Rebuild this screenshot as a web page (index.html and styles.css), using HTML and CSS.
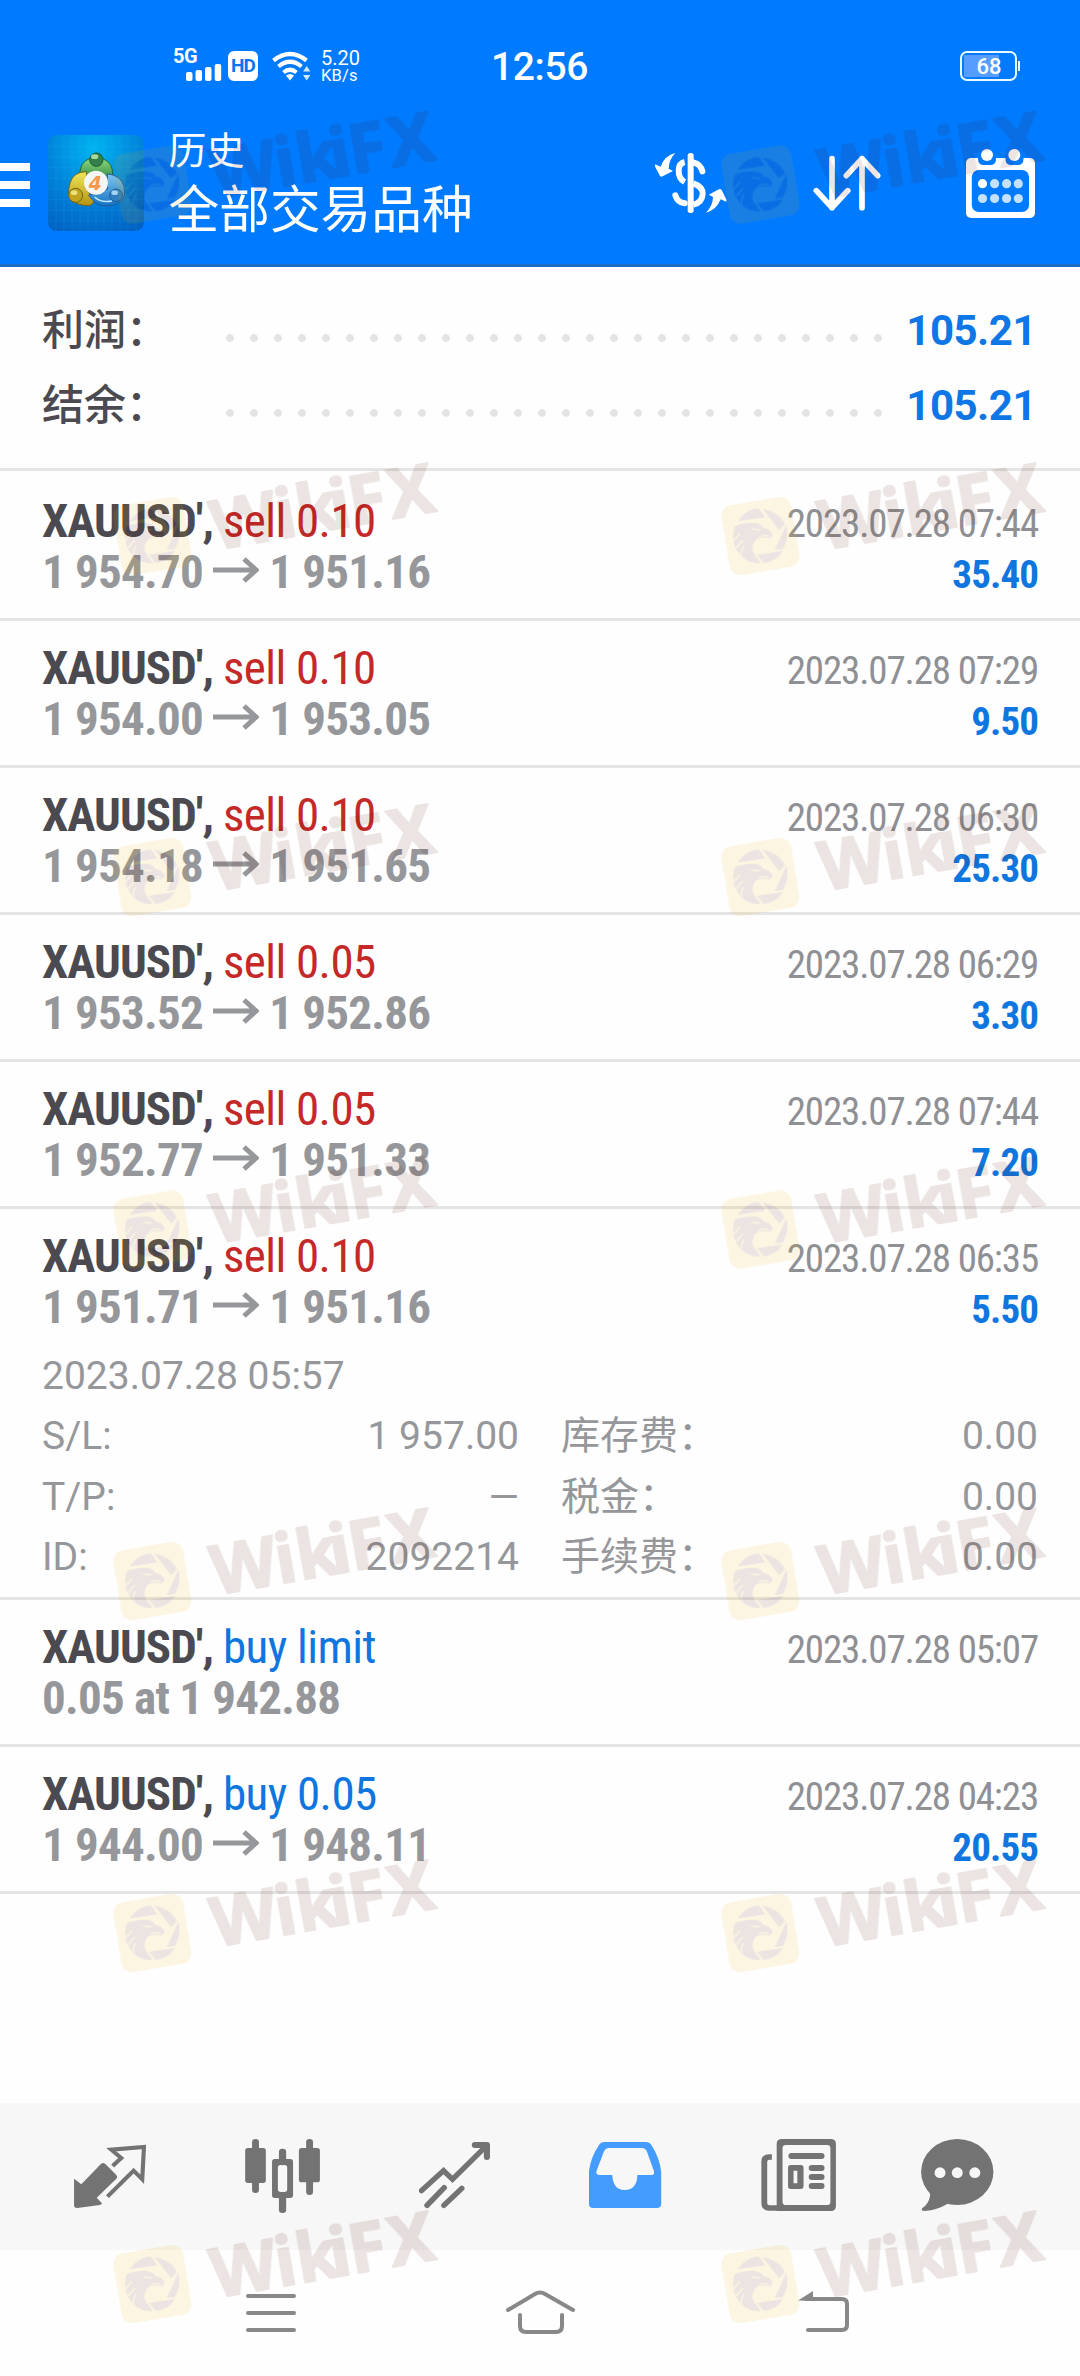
FILE: index.html
```html
<!DOCTYPE html>
<html lang="zh-CN">
<head>
<meta charset="utf-8">
<title>历史</title>
<link rel="stylesheet" href="styles.css">
</head>
<body>
<div class="screen">
  <svg class="defs" width="0" height="0">
    <defs>
      <symbol id="arrow" viewBox="0 0 46 26">
        <path d="M0 13H42M31 2L43 13L31 24" fill="none" stroke="currentColor" stroke-width="5"/>
      </symbol>
      <g id="mark">
        <g transform="translate(-157 -160)">
          <rect x="-106" y="-106" width="212" height="212" rx="32" transform="translate(157 160) rotate(-9.5)" fill="#ecad00"/>
          <g fill="#551a08">
            <path d="M89 116Q112 80 152 77L171 104Z"/>
            <path d="M163 78Q212 86 231 124L213 142Z"/>
            <path d="M235 126Q245 165 224 199L200 202Z"/>
            <path d="M147 216L225 204Q206 236 166 240Z"/>
            <path d="M80 131Q100 119 140 120Q160 124 165 135Q190 139 193 158Q190 164 186 166Q150 160 138 177Q128 200 137 212L158 241Q120 244 95 215Q70 185 76 145Z"/>
          </g>
          <g fill="none" stroke="#ecad00" stroke-width="4">
            <path d="M131 137Q143 143 156 140M152 163Q166 157 182 160M76 175L96 152M84 196L104 172M100 220Q98 204 109 188"/>
          </g>
        </g>
        <text class="mark-text" transform="translate(188 47) rotate(-10)" x="2 196 260 362 420 541" y="-3">WikiFX</text>
      </g>
    </defs>
  </svg>

  <header class="header">
    <div class="status">
      <div class="signal">
        <span class="net">5G</span>
        <svg class="bars" width="36" height="17" viewBox="0 0 36 17" fill="#fff"><rect y="8" width="6.500" height="9" rx="2"/><rect x="9.500" y="6" width="6.500" height="11" rx="2"/><rect x="19" y="3" width="6.500" height="14" rx="2"/><rect x="28.700" width="6.500" height="17" rx="2"/></svg>
      </div>
      <span class="hd">HD</span>
      <svg class="wifi" width="39" height="30" viewBox="0 0 39 30">
        <g fill="none" stroke="#fff" stroke-width="4.200"><path d="M1.500 9.500Q18 -3.500 34.500 9.500"/><path d="M6.500 15.500Q18 6 29.500 15.500"/><path d="M11.500 21.500Q18 16 24.500 21.500"/></g>
        <path d="M14 24.500Q18 21.500 22 24.500L18 29.500Z" fill="#fff"/>
        <path d="M31 20.500L34.700 15L38.400 20.500ZM31 24L34.700 29.500L38.400 24Z" fill="#cfe9ff"/>
      </svg>
      <div class="speed"><span>5.20</span><span class="unit">KB/s</span></div>
      <span class="clock">12:56</span>
      <div class="battery"><span class="level">68</span></div>
    </div>
    <div class="toolbar">
      <div class="menu"><i></i><i></i><i></i></div>
      <svg class="app-logo" width="96" height="96" viewBox="12 14 288 288">
        <defs>
          <radialGradient id="lg" cx=".48" cy=".14" r=".95"><stop offset="0" stop-color="#00b4f0"/><stop offset=".5" stop-color="#0085dc"/><stop offset="1" stop-color="#0062c2"/></radialGradient>
          <linearGradient id="gg" x2="0" y2="1"><stop offset="0" stop-color="#8fd67f"/><stop offset="1" stop-color="#1f7d35"/></linearGradient>
          <linearGradient id="yg" x2="0" y2="1"><stop offset="0" stop-color="#f0e75a"/><stop offset="1" stop-color="#b59312"/></linearGradient>
          <linearGradient id="bg" x2="0" y2="1"><stop offset="0" stop-color="#7fc6ee"/><stop offset="1" stop-color="#1573c4"/></linearGradient>
        </defs>
        <rect x="12" y="14" width="288" height="288" rx="26" fill="url(#lg)"/>
        <path d="M36 14V302M60 14V302M84 14V302M108 14V302M132 14V302M156 14V302M180 14V302M204 14V302M228 14V302M252 14V302M276 14V302M12 48H300M12 80H300M12 112H300M12 144H300M12 176H300M12 208H300M12 240H300M12 272H300" stroke="#4ac4ff" stroke-opacity=".16" stroke-width="2"/>
        <g stroke-width="3">
          <path d="M108 140Q104 96 138 84H174Q208 96 206 136Q200 152 190 160L122 142Z" fill="url(#gg)" stroke="#1d6a3a"/>
          <path d="M128 124Q88 124 78 158Q70 186 78 206Q98 226 136 226Q152 220 150 206L124 172Z" fill="url(#yg)" stroke="#6c6420"/>
          <path d="M190 130Q232 136 240 168Q246 196 234 210Q208 232 176 226Q150 220 134 194L160 188L190 176Z" fill="url(#bg)" stroke="#1a5c9e"/>
          <path d="M152 200Q170 218 204 212" fill="none" stroke="#bfe6ff" stroke-width="5"/>
          <circle cx="157" cy="88" r="20" fill="#35804a" stroke="#1b5a33"/>
          <ellipse cx="152" cy="79" rx="11" ry="7" fill="#a5dba0" stroke="none"/>
          <circle cx="95" cy="195" r="21" fill="#c0a51e" stroke="#75651a"/>
          <ellipse cx="90" cy="187" rx="10" ry="7" fill="#eee07a" stroke="none"/>
          <circle cx="216" cy="195" r="19" fill="#2f7fc0" stroke="#1d5b98"/>
          <ellipse cx="212" cy="187" rx="10" ry="7" fill="#9fd4f4" stroke="none"/>
        </g>
        <circle cx="156" cy="157" r="36" fill="#f4f6f6"/>
        <text class="four" x="154" y="180">4</text>
      </svg>
      <div class="titles"><div class="sub">历史</div><div class="main">全部交易品种</div></div>
      <div class="actions">
        <svg width="74" height="62" viewBox="40 36 222 186">
          <g fill="none" stroke="#fff" stroke-width="18"><path d="M132 66Q114 70 114 92Q114 116 132 126"/><path d="M104 166Q110 188 132 190" stroke-linecap="round"/><path d="M158 67Q180 72 185 94" stroke-linecap="round"/><path d="M158 130Q187 140 186 162Q184 188 158 194"/></g>
          <rect x="141" y="39" width="18" height="180" rx="8" fill="#fff"/>
          <path d="M104 39Q72 46 60 80L44 73Q42 76 44 82L58 108Q60 112 66 109L97 93L84 86Q84 60 104 39Z" fill="#fff"/>
          <path d="M196 218Q228 210 240 178L256 185Q259 182 256 176L243 150Q240 146 235 148L204 164L217 171Q217 196 196 218Z" fill="#fff"/>
        </svg>
        <svg width="68" height="56" viewBox="516 44 204 168" fill="none" stroke="#fff" stroke-width="17" stroke-linecap="round" stroke-linejoin="round">
          <path d="M573 55V202M526 151L573 202L620 151"/><path d="M663 202V55M616 106L663 55L710 106"/>
        </svg>
        <svg width="69" height="69" viewBox="966 147 69 69">
          <rect x="966" y="156" width="69" height="60" rx="5" fill="#fff"/>
          <path d="M978 154h18v3q0 6-6 6h-6q-6 0-6-6ZM1005.500 154h18v3q0 6-6 6h-6q-6 0-6-6Z" fill="#007aff"/>
          <circle cx="987" cy="153" r="6" fill="#fff"/><circle cx="1014.300" cy="153" r="6" fill="#fff"/>
          <rect x="971.800" y="168" width="57.200" height="42" rx="7" fill="#007aff"/>
          <g fill="#c4e2ff"><circle cx="982.500" cy="181.700" r="4.600" fill="#fff"/><circle cx="994.600" cy="181.700" r="4.600"/><circle cx="1006.600" cy="181.700" r="4.600"/><circle cx="1018.300" cy="181.700" r="4.600"/><circle cx="982.500" cy="196.500" r="4.600"/><circle cx="994.600" cy="196.500" r="4.600"/><circle cx="1006.600" cy="196.500" r="4.600"/><circle cx="1018.300" cy="196.500" r="4.600"/></g>
        </svg>
      </div>
    </div>
  </header>

  <main class="content">
    <section class="summary">
      <div class="sum"><span class="sum-label">利润：</span><span class="dots"></span><span class="sum-value">105.21</span></div>
      <div class="sum"><span class="sum-label">结余：</span><span class="dots"></span><span class="sum-value">105.21</span></div>
    </section>

    <section class="deals">
      <article class="deal">
        <div class="line"><div class="name"><b>XAUUSD',</b> <span class="sell">sell 0.10</span></div><time class="date">2023.07.28 07:44</time></div>
        <div class="line"><div class="price">1 954.70 <svg class="to"><use href="#arrow"/></svg> 1 951.16</div><div class="profit">35.40</div></div>
      </article>
      <article class="deal">
        <div class="line"><div class="name"><b>XAUUSD',</b> <span class="sell">sell 0.10</span></div><time class="date">2023.07.28 07:29</time></div>
        <div class="line"><div class="price">1 954.00 <svg class="to"><use href="#arrow"/></svg> 1 953.05</div><div class="profit">9.50</div></div>
      </article>
      <article class="deal">
        <div class="line"><div class="name"><b>XAUUSD',</b> <span class="sell">sell 0.10</span></div><time class="date">2023.07.28 06:30</time></div>
        <div class="line"><div class="price">1 954.18 <svg class="to"><use href="#arrow"/></svg> 1 951.65</div><div class="profit">25.30</div></div>
      </article>
      <article class="deal">
        <div class="line"><div class="name"><b>XAUUSD',</b> <span class="sell">sell 0.05</span></div><time class="date">2023.07.28 06:29</time></div>
        <div class="line"><div class="price">1 953.52 <svg class="to"><use href="#arrow"/></svg> 1 952.86</div><div class="profit">3.30</div></div>
      </article>
      <article class="deal">
        <div class="line"><div class="name"><b>XAUUSD',</b> <span class="sell">sell 0.05</span></div><time class="date">2023.07.28 07:44</time></div>
        <div class="line"><div class="price">1 952.77 <svg class="to"><use href="#arrow"/></svg> 1 951.33</div><div class="profit">7.20</div></div>
      </article>
      <article class="deal open">
        <div class="line"><div class="name"><b>XAUUSD',</b> <span class="sell">sell 0.10</span></div><time class="date">2023.07.28 06:35</time></div>
        <div class="line"><div class="price">1 951.71 <svg class="to"><use href="#arrow"/></svg> 1 951.16</div><div class="profit">5.50</div></div>
        <div class="detail">
          <div class="opened">2023.07.28 05:57</div>
          <div class="pair"><span>S/L:</span><span>1 957.00</span></div><div class="pair"><span>库存费：</span><span>0.00</span></div>
          <div class="pair"><span>T/P:</span><span>—</span></div><div class="pair"><span>税金：</span><span>0.00</span></div>
          <div class="pair"><span>ID:</span><span>2092214</span></div><div class="pair"><span>手续费：</span><span>0.00</span></div>
        </div>
      </article>
      <article class="deal">
        <div class="line"><div class="name"><b>XAUUSD',</b> <span class="buy">buy limit</span></div><time class="date">2023.07.28 05:07</time></div>
        <div class="line"><div class="price">0.05 at 1 942.88</div></div>
      </article>
      <article class="deal">
        <div class="line"><div class="name"><b>XAUUSD',</b> <span class="buy">buy 0.05</span></div><time class="date">2023.07.28 04:23</time></div>
        <div class="line"><div class="price">1 944.00 <svg class="to"><use href="#arrow"/></svg> 1 948.11</div><div class="profit">20.55</div></div>
      </article>
    </section>
  </main>

  <nav class="tabs">
    <svg width="72" height="78" viewBox="74 47 72 78"><g transform="scale(.3444 .3333)" fill="#737373">
      <path d="M215 266L236 283L293 222Q299 216 306 222L337 254Q343 261 337 267L281 323L296 340Q296 344 290 345L224 354Q215 354 215 346Z"/>
      <path d="M327 228L352 204L323 179L418 171L413 268L388 242L312 320" fill="none" stroke="#737373" stroke-width="12"/></g></svg>
    <svg width="75" height="78" viewBox="244 47 75 78"><g transform="scale(.3444 .3333)" fill="#737373">
      <rect x="729" y="147" width="20" height="162" rx="10"/><rect x="709" y="174" width="60" height="105" rx="8"/>
      <rect x="807" y="176" width="21" height="50" rx="10"/><rect x="807" y="310" width="21" height="59" rx="10"/>
      <path fill-rule="evenodd" d="M795 207H840Q848 207 848 215V316Q848 324 840 324H795Q787 324 787 316V215Q787 207 795 207ZM812 225Q804 225 804 233V298Q804 306 812 306H823Q831 306 831 298V233Q831 225 823 225Z"/>
      <rect x="886" y="147" width="20" height="168" rx="10"/><rect x="865" y="174" width="61" height="103" rx="8"/></g></svg>
    <svg width="71" height="78" viewBox="418 47 71 78"><g transform="scale(.3444 .3333)" fill="none" stroke="#737373" stroke-width="16" stroke-linecap="round">
      <path d="M1221 302L1285 242L1311 268L1410 167"/><path d="M1376 165H1411V201" stroke-width="18" stroke-linejoin="round"/><path d="M1237 346L1287 293M1286 346L1338 295"/></g></svg>
    <svg width="73" height="78" viewBox="50.400 47 73 78"><g transform="scale(.3444 .3333)">
      <path fill="#459cff" fill-rule="evenodd" d="M146 246Q150 205 175 166Q181 156 192 156H311Q322 156 328 166Q352 205 356 246V341Q356 354 343 354H160Q146 354 146 341ZM189 186Q194 174 205 174H299Q311 174 315 186L335 244Q337 255 327 255H287Q285 300 250 300Q216 300 214 255H177Q166 255 168 244Z"/></g></svg>
    <svg width="76" height="78" viewBox="222.300 47 76 78"><g transform="scale(.3444 .3333)" fill="#737373">
      <path fill-rule="evenodd" d="M706 147H848Q863 147 863 162V348Q863 363 848 363H691V162Q691 147 706 147ZM718 165Q708 165 708 175V335Q708 345 718 345H837Q847 345 847 335V175Q847 165 837 165Z"/>
      <path d="M677 201H670Q655 201 655 216V338Q655 354 671 354H695" fill="none" stroke="#737373" stroke-width="17"/>
      <rect x="725" y="189" width="105" height="18" rx="9"/>
      <path fill-rule="evenodd" d="M732 225H761Q769 225 769 233V289Q769 297 761 297H732Q724 297 724 289V233Q724 225 732 225ZM740 242V280H751V242Z"/>
      <rect x="784" y="225" width="46" height="18" rx="9"/><rect x="784" y="252" width="46" height="18" rx="9"/><rect x="784" y="279" width="46" height="18" rx="9"/></g></svg>
    <svg class="chat" width="73" height="78" viewBox="381.500 47 73 78"><g transform="scale(.3444 .3333)" fill="#737373">
      <ellipse cx="1213" cy="246" rx="105" ry="99"/><path d="M1125 290Q1136 305 1134 318Q1130 342 1111 355Q1106 362 1118 363Q1155 360 1184 342L1210 320Z"/>
      <g fill="#f7f7f7"><circle cx="1163" cy="248" r="16"/><circle cx="1213" cy="248" r="16"/><circle cx="1264" cy="248" r="16"/></g></g></svg>
  </nav>

  <footer class="sysnav">
    <svg width="50" height="46" viewBox="246 2290 50 46" fill="none" stroke="#888" stroke-width="4" stroke-linecap="round"><path d="M248 2296H294M248 2313H294M248 2330H294"/></svg>
    <svg class="home" width="70" height="46" viewBox="505 2290 70 46" fill="none" stroke="#888" stroke-width="4" stroke-linecap="round"><path d="M508 2310L535 2294Q540 2291 545 2294L573 2310M520 2315V2326Q520 2332 526 2332H556Q562 2332 562 2326V2315"/></svg>
    <svg width="52" height="46" viewBox="798 2290 52 46" fill="none" stroke="#888" stroke-width="4" stroke-linecap="round"><path d="M806 2299H842Q847 2299 847 2304V2325Q847 2330 842 2330H808"/><path d="M798 2300.500L813 2291V2301Z" fill="#888" stroke="none"/></svg>
  </footer>

  <svg class="watermarks" width="1080" height="2376" viewBox="0 0 1080 2376">
    <g opacity=".11">
      <use href="#mark" transform="translate(152.400 184.500) scale(.33333)"/><use href="#mark" transform="translate(760.400 184.500) scale(.33333)"/>
      <use href="#mark" transform="translate(152.400 536) scale(.33333)"/><use href="#mark" transform="translate(760.400 536) scale(.33333)"/>
      <use href="#mark" transform="translate(152.400 877) scale(.33333)"/><use href="#mark" transform="translate(760.400 877) scale(.33333)"/>
      <use href="#mark" transform="translate(152.400 1229.500) scale(.33333)"/><use href="#mark" transform="translate(760.400 1229.500) scale(.33333)"/>
      <use href="#mark" transform="translate(152.400 1581) scale(.33333)"/><use href="#mark" transform="translate(760.400 1581) scale(.33333)"/>
      <use href="#mark" transform="translate(152.400 1933) scale(.33333)"/><use href="#mark" transform="translate(760.400 1933) scale(.33333)"/>
      <use href="#mark" transform="translate(152.400 2284) scale(.33333)"/><use href="#mark" transform="translate(760.400 2284) scale(.33333)"/>
    </g>
  </svg>
</div>
</body>
</html>
```
FILE: styles.css
```css
* { box-sizing: border-box; }
body { margin: 0; background: #fefefe; font-family: Roboto, "Noto Sans CJK SC", sans-serif; }
.screen { position: relative; width: 1080px; height: 2376px; display: flex; flex-direction: column; overflow: hidden; }
.defs { position: absolute; }
svg { display: block; flex: none; }

.header { height: 267px; background: #007aff; border-bottom: 3px solid #1a6cc4; color: #fff; }
.status { height: 102px; padding: 49px 60px 0 173px; display: flex; align-items: flex-start; }
.signal { width: 55px; height: 33px; display: flex; flex-direction: column; }
.net { font-size: 20px; line-height: 15px; font-weight: 700; letter-spacing: -.5px; }
.bars { margin: 0 0 0 13px; }
.hd { width: 30px; height: 30px; margin-top: 2px; border-radius: 6px; background: #fff; color: #0a74f0; font-size: 19px; font-weight: 700; line-height: 30px; text-align: center; letter-spacing: -1px; }
.wifi { margin: 2px 0 0 14px; }
.speed { width: 50px; margin: 1px 0 0 10px; display: flex; flex-direction: column; font-size: 20px; line-height: 17px; }
.unit { font-size: 16.5px; letter-spacing: .2px; }
.clock { margin: -2px 0 0 120px; font-size: 39px; line-height: 40px; font-weight: 500; letter-spacing: -.4px; }
.battery { position: relative; width: 57px; height: 30px; margin: 2px 3px 0 auto; border: 2px solid #e8fbff; border-radius: 7px; padding: 1.500px; background: linear-gradient(#559eff, #559eff) 2px 2px / 35px 22px no-repeat; }
.battery::after { content: ""; position: absolute; right: -5px; top: 8px; width: 2px; height: 10px; background: #e8fbff; }
.level { display: block; margin-left: 1px; text-align: center; font-size: 22px; line-height: 24px; font-weight: 500; }

.toolbar { height: 162px; padding-right: 45px; display: flex; align-items: center; }
.menu { display: flex; flex-direction: column; gap: 10px; width: 30px; margin-top: 4px; }
.menu i { height: 8px; background: #fff; }
.app-logo { margin-left: 18px; }
.four { font: italic 700 56px "DejaVu Sans", sans-serif; fill: #f2994a; text-anchor: middle; }
.titles { margin: -9px 0 0 24.500px; font-family: "Noto Sans CJK SC", sans-serif; font-weight: 400; }
.sub { font-size: 38px; line-height: 55px; }
.main { font-size: 50.700px; line-height: 62px; }
.actions { margin-left: auto; display: flex; align-items: center; gap: 85px; }

.content { height: 1836px; }
.summary { height: 204px; padding: 26px 44px 0 42px; border-bottom: 3px solid #e4e4e4; }
.sum { height: 75px; display: flex; align-items: center; font-size: 42px; line-height: 75px; }
.sum-label { width: 184px; font-weight: 500; color: #4b4a50; }
.dots { width: 672px; height: 8px; margin-top: 15px; background: radial-gradient(circle 4px at 4px 4px, #e4e4e4 3.500px, transparent 4px) 0 0 / 24px 8px; }
.sum-value { margin-left: auto; font-weight: 700; letter-spacing: -.5px; color: #0f76e6; }

.deals { padding-top: 3px; }
.deal { height: 147px; padding: 21px 42px 0 42px; border-bottom: 3px solid #e4e4e4; }
.deal.open { height: 391px; }
.line { height: 51px; display: flex; justify-content: space-between; align-items: baseline; line-height: 51px; font-family: "Roboto Condensed", Roboto, sans-serif; font-stretch: 75%; white-space: nowrap; }
.name, .price { font-size: 47px; }
.name { color: #4b4a50; letter-spacing: -.95px; }
.sell, .buy { letter-spacing: -.55px; }
.sell { color: #c52828; }
.buy { color: #0f76e0; }
.price { font-weight: 700; letter-spacing: -.75px; color: #96979b; }
.to { display: inline-block; width: 46px; height: 26px; vertical-align: 5px; }
.date { font-size: 39px; letter-spacing: -1.150px; color: #8f9094; }
.profit { font-size: 39px; font-weight: 700; letter-spacing: -.9px; color: #0f76e0; }
.detail { margin-top: 13.600px; display: grid; grid-template-columns: 477px 477px; column-gap: 42px; font-size: 39px; line-height: 60.600px; color: #96979b; }
.opened { grid-column: 1 / -1; }
.pair { display: flex; justify-content: space-between; height: 60.600px; }

.tabs { height: 147px; background: #f7f7f7; padding: 34px 0 0 74px; display: flex; gap: 99px; }
.chat { margin-left: -15px; }
.sysnav { height: 126px; padding: 40px 0 0 246px; display: flex; }
.home { margin: 0 223px 0 209px; }

.watermarks { position: absolute; left: 0; top: 0; pointer-events: none; }
.mark-text { font: 700 205px "Noto Sans", sans-serif; fill: #551a08; stroke: #551a08; stroke-width: 6px; stroke-linejoin: round; }
```
